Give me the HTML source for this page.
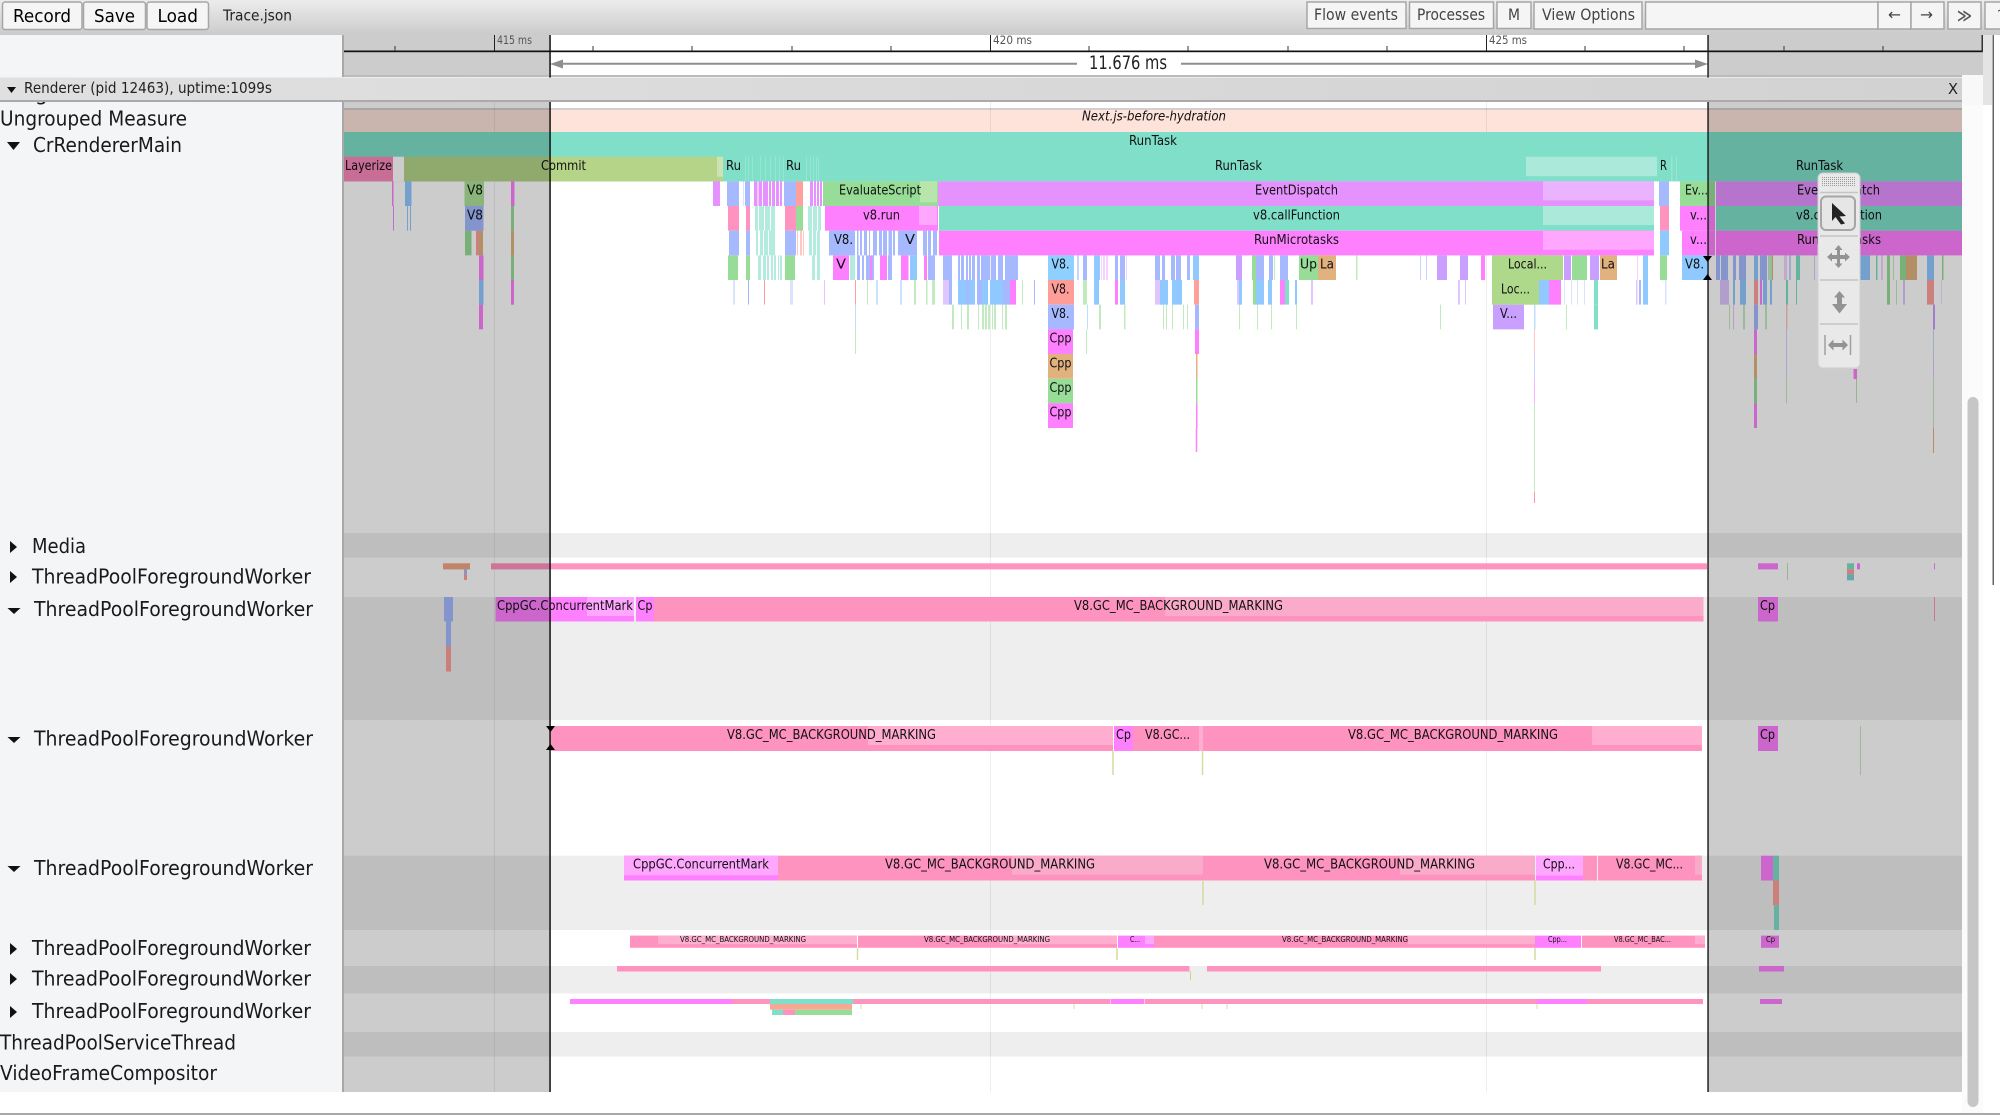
<!DOCTYPE html>
<html><head><meta charset="utf-8"><title>Trace.json</title>
<style>
html,body{margin:0;padding:0;background:#fff;width:2000px;height:1115px;overflow:hidden}
svg{display:block}
text{font-family:"DejaVu Sans","Liberation Sans",sans-serif;fill:#111}
.bt{font-size:13px}
.lb{font-size:20px;fill:#1a1a1a}
.tb{font-size:16px;fill:#444}
path{fill:none}
.l{stroke:#e592ff}.b{stroke:#a6b9ff}.s{stroke:#90c9ff}.p{stroke:#ff93c0}.m{stroke:#ff80ff}.g{stroke:#97dc97}.t{stroke:#80dfc9}.a{stroke:#ffa09b}.n{stroke:#e2b27e}.u{stroke:#c9a0ff}
.r{stroke-width:24.67}
.o6{opacity:.6}.o4{opacity:.4}
</style></head><body>
<svg width="2000" height="1115" viewBox="0 0 2000 1115" xmlns="http://www.w3.org/2000/svg">
<defs><linearGradient id="tg" x1="0" y1="0" x2="0" y2="1"><stop offset="0" stop-color="#ececec"/><stop offset="1" stop-color="#cbcbcb"/></linearGradient>
<linearGradient id="hg" x1="0" y1="0" x2="1" y2="0"><stop offset="0" stop-color="#e0e0e0"/><stop offset="1" stop-color="#d2d2d2"/></linearGradient></defs>
<rect width="2000" height="1115" fill="#fff"/>
<rect x="0" y="35" width="343" height="1057" fill="#f4f5f7"/>
<rect x="1962" y="102" width="21" height="1011" fill="#fbfbfb"/>
<rect x="1983" y="35" width="9" height="70" fill="#e4e4e4"/>
<rect x="1992.5" y="35" width="1.5" height="550" fill="#666"/>

<!-- clipped label -->
<text x="35" y="100" class="lb">g</text>

<!-- rows backgrounds -->
<rect x="343" y="108" width="1619" height="2" fill="#d0d0d0"/>
<rect x="343" y="110" width="1619" height="22" fill="#fde3da"/>
<rect x="343" y="533" width="1619" height="24.6" fill="#eee"/>
<rect x="343" y="597" width="1619" height="123" fill="#eee"/>
<rect x="343" y="855.7" width="1619" height="74.3" fill="#eee"/>
<rect x="343" y="966" width="1619" height="27.4" fill="#eee"/>
<rect x="343" y="1032" width="1619" height="24.5" fill="#eee"/>
<path d="M494.5 102V1092M990.5 102V1092M1486.5 102V1092" stroke="#000" stroke-opacity=".07" stroke-width="1"/>

<!-- main big rows -->
<rect x="343" y="132" width="1619" height="25" fill="#80dfc9"/>
<rect x="343" y="156.7" width="1619" height="24.7" fill="#80dfc9"/>
<rect x="343" y="156.7" width="50" height="24.7" fill="#fa89bb"/>
<rect x="393" y="156.7" width="11" height="24.7" fill="#fff"/>
<rect x="404" y="156.7" width="319" height="24.7" fill="#b5d488"/>
<rect x="717" y="156.7" width="6" height="20" fill="#cfe3b0"/>
<rect x="1526" y="156.7" width="131" height="19.5" fill="#abe9db"/>
<path d="M745 169H746M748 169H749M752 169H753M760 169H761M765 169H766M770 169H771M775 169H776M779 169H780M783 169H784M806 169H807M810 169H811M813 169H814M816 169H817M818 169H819M1671 169H1672.5M1676 169H1677" stroke="#fff" stroke-opacity=".2" class="r"/>

<rect x="823" y="181.3" width="115" height="24.7" fill="#97dc97"/><rect x="920" y="181.3" width="17" height="21" fill="#b7e5ab"/>
<rect x="938" y="181.3" width="716" height="24.7" fill="#e592ff"/><rect x="1543" y="181.3" width="111" height="19" fill="#eab3ff"/>
<rect x="1680" y="181.3" width="35" height="24.7" fill="#97dc97"/>
<rect x="1716" y="181.3" width="246" height="24.7" fill="#e592ff"/>

<rect x="825" y="206" width="113" height="24.7" fill="#ff80ff"/><rect x="919" y="206" width="18" height="19" fill="#ffa6ff"/>
<rect x="939" y="206" width="715" height="24.7" fill="#80dfc9"/><rect x="1543" y="206" width="111" height="19" fill="#abe9db"/>
<rect x="1680" y="206" width="35" height="24.7" fill="#ff80ff"/>
<rect x="1716" y="206" width="246" height="24.7" fill="#80dfc9"/>

<rect x="939" y="230.7" width="715" height="24.7" fill="#ff80ff"/><rect x="1543" y="230.7" width="111" height="19" fill="#ffa6ff"/>
<rect x="1682" y="230.7" width="33" height="24.7" fill="#ff80ff"/>
<rect x="1716" y="230.7" width="246" height="24.7" fill="#ff80ff"/>

<!-- row 2 stripes -->
<g transform="translate(0,193.7)">
<path class="r l" d="M713 0H720M754 0H757.5M758.5 0H762M763 0H768M769 0H771M772 0H775M776 0H779M780 0H782M810 0H813M814 0H816M817 0H819M820 0H822"/>
<path class="r b" d="M727 0H739M745 0H750M784 0H796M1659 0H1669"/>
<path class="r a" d="M796 0H803"/>
<path class="r b o4" d="M743 0H744"/>
</g>
<g transform="translate(0,218.3)">
<path class="r p" d="M728 0H739M746 0H750M785 0H796M1660 0H1669"/>
<path class="r g" d="M796 0H803"/>
<path class="r t o6" d="M755 0H758M759 0H764M765 0H770M771 0H775M808 0H812M813 0H817M818 0H821"/>
</g>
<g transform="translate(0,243)">
<path class="r b" d="M729 0H739M746 0H750M785 0H796M829 0H855M857 0H858.5M860 0H862M864 0H867M869 0H870M873 0H877M879 0H882M883 0H887M888.5 0H892M893 0H895M898 0H917M923 0H927M928 0H931M933 0H937"/>
<path class="r s" d="M1660 0H1669"/>
<path class="r a o6" d="M797 0H798M800 0H802M803 0H804"/>
<path class="r t o6" d="M756 0H758M760 0H763M764 0H768M769 0H775M809 0H812M813 0H816M817 0H820"/>
<path class="r g" d="M465 0H471.5"/>
<path class="r a" d="M476 0H479"/>
<path class="r n" d="M479 0H483M511 0H514"/>
</g>
<g transform="translate(0,267.7)">
<path class="r g" d="M511 0H514M728 0H738M746 0H750M785 0H795M1252 0H1256M1660 0H1667M1572 0H1587M1887 0H1890M1900 0H1906M1942 0H1943.5"/>
<path class="r t o6" d="M758 0H761M763 0H766M767 0H769M771 0H773M774 0H776M778 0H779M780 0H782M812 0H815M817 0H820M850 0H855"/>
<path class="r m" d="M479 0H483.5M833 0H849M870 0H873M880 0H887M901 0H908.5M924 0H927M1481 0H1485"/>
<path class="r b" d="M857 0H860M862 0H864M866 0H870M872 0H874M888 0H892M928 0H935M943 0H952M958 0H960M961 0H964M966 0H968M969 0H971M972 0H975M977 0H980M981 0H990M991 0H996M998 0H1003M1005 0H1018M1083 0H1087M1115 0H1118M1120 0H1125M1155 0H1160M1162 0H1165M1171 0H1175M1176 0H1181M1187 0H1190M1256 0H1264M1269 0H1273M1280 0H1288M1716 0H1720M1721 0H1728M1733 0H1736M1739 0H1746M1760 0H1767"/>
<path class="r s" d="M910 0H917M1094 0H1100M1193 0H1199M1643 0H1648M1754 0H1758M1860 0H1870M1927 0H1934"/>
<path class="r u" d="M1236 0H1242M1437 0H1447M1460 0H1468M1564 0H1571M1590 0H1599"/>
<path class="r l o4" d="M1101 0H1102M1103 0H1105M1106 0H1108M1126 0H1127M1637 0H1638M1784 0H1787M1881 0H1883"/>
<path class="r b o6" d="M1077 0H1079M1420 0H1421M1426 0H1427M1789 0H1791M1814 0H1815"/>
<path class="r t" d="M1796 0H1800M1876 0H1877.5"/>
<path class="r n" d="M1906 0H1917M1772 0H1773"/>
<path class="r g o6" d="M1274 0H1275M1356 0H1357.5M1768 0H1772M1893 0H1894"/>
</g>
<g transform="translate(0,292.3)">
<path class="r b o4" d="M733 0H735M790 0H793"/>
<path class="r b" d="M748 0H749M949 0H952M966 0H969M977 0H982M1003 0H1010M1034 0H1035M1160 0H1162M1639 0H1641"/>
<path class="r a" d="M764 0H765M855 0H856M1194 0H1199M1754 0H1758M1927 0H1934"/>
<path class="r u o6" d="M824 0H825M943 0H949M1155 0H1160M1237 0H1242M1311 0H1313M1458 0H1460M1465 0H1466M1636 0H1637.5M1720 0H1729M1903 0H1905"/>
<path class="r g o6" d="M867 0H868M914 0H916M926 0H927.5M932 0H935M1022 0H1023M1083 0H1087M1896 0H1897"/>
<path class="r s" d="M876.5 0H877.5M900.5 0H901.5M958 0H966M969 0H975M982 0H988M990 0H1003M1094 0H1099M1120 0H1125M1160 0H1168M1172 0H1182M1239 0H1242M1256 0H1264M1268 0H1272M1295 0H1297M1539 0H1549M1643 0H1648M1733 0H1735M1740 0H1746M1763 0H1767M1770 0H1772"/>
<path class="r m" d="M1010 0H1016M1115 0H1118M1280 0H1285M1549 0H1561M1760 0H1762"/>
<path class="r g" d="M1253 0H1256M1887 0H1890"/>
<path class="r t" d="M1285 0H1289M1594 0H1598M1786 0H1788M1796 0H1797"/>
<path class="r b o4" d="M1564 0H1565M1571 0H1572M1577 0H1578M1584 0H1585M1665 0H1666.5M1941 0H1942"/>
</g>
<g transform="translate(0,317)">
<path class="r s o6" d="M855 0H856M1087 0H1088M1534 0H1535.5"/>
<path class="r g o6" d="M952 0H954M961 0H962M967 0H969M978 0H979M982 0H984M985 0H987M988 0H990M992 0H993M994 0H996M1002 0H1003M1005 0H1007M1099 0H1101M1124 0H1125.5M1163 0H1164M1166 0H1167M1172 0H1173M1183 0H1184M1187 0H1188M1239 0H1240M1257 0H1258M1271 0H1272M1296 0H1297M1440 0H1441M1566 0H1567M1729 0H1730M1743 0H1745M1765 0H1767"/>
<path class="r b" d="M1195 0H1199M1754 0H1758"/>
<path class="r u" d="M1493 0H1524M1933 0H1935"/>
<path class="r t" d="M1594 0H1598"/>
<path class="r a o6" d="M1786 0H1787.5"/>
<path class="r l o6" d="M1733 0H1734"/>
<path class="r m" d="M479 0H483"/>
</g>
<g transform="translate(0,341.7)">
<path class="r g o6" d="M855 0H856M1086 0H1087"/>
<path class="r m" d="M1195 0H1199M1754 0H1757"/>
<path class="r a o6" d="M1534 0H1535"/>
<path class="r b o6" d="M1786 0H1787M1933 0H1934"/>
</g>
<g transform="translate(0,366.3)">
<path class="r n" d="M1196 0H1197.5M1754 0H1757"/>
<path class="r b o6" d="M1534 0H1535M1786 0H1787"/>
<path class="r u o6" d="M1933 0H1934"/>
</g>
<g transform="translate(0,391)">
<path class="r g" d="M1196 0H1197.5M1754 0H1757"/>
<path class="r m o6" d="M1534 0H1535"/>
<path class="r g o6" d="M1786 0H1787M1933 0H1934"/>
</g>
<rect x="1853.500" y="369" width="3.500" height="10" fill="#ff80ff"/>
<rect x="1856" y="379" width="1" height="24" fill="#97dc97" fill-opacity=".7"/>
<g transform="translate(0,415.7)">
<path class="r m" d="M1196 0H1197.5M1754 0H1757"/>
<path class="r g o6" d="M1534 0H1535M1933 0H1934"/>
</g>
<path d="M1196.5 428V452" class="m" stroke-width="1.5"/>
<path d="M1534.5 428V492" class="g o6" stroke-width="1"/><path d="M1534.5 492V503" class="p" stroke-width="1"/>
<path d="M1933.5 428V453" class="n" stroke-width="1"/>

<!-- left dim region bars -->
<rect x="392" y="181.3" width="1.5" height="24.7" fill="#ff80ff"/><rect x="405" y="181.3" width="6.5" height="24.7" fill="#90c9ff"/>
<rect x="464.5" y="181.3" width="19.5" height="24.7" fill="#aee29a"/><rect x="511" y="181.3" width="3.5" height="24.7" fill="#ff80ff"/>
<rect x="393" y="206" width="1" height="24.7" fill="#e592ff"/><rect x="407" y="206" width="1" height="24.7" fill="#90c9ff"/><rect x="410" y="206" width="1" height="24.7" fill="#90c9ff"/>
<rect x="465" y="206" width="18.5" height="24.7" fill="#a6b9ff"/><rect x="511" y="206" width="3" height="24.7" fill="#97dc97"/>
<rect x="479" y="280" width="4.5" height="24.7" fill="#90c9ff"/><rect x="511" y="280" width="3" height="24.7" fill="#ff80ff"/>

<!-- V8 column -->
<rect x="1048" y="255.3" width="26" height="24.7" fill="#8ed0ff"/>
<rect x="1048" y="280" width="26" height="24.7" fill="#ff9e98"/>
<rect x="1048" y="304.7" width="26" height="24.7" fill="#a6b9ff"/>
<rect x="1048" y="329.3" width="25" height="24.7" fill="#ff80ff"/>
<rect x="1048" y="354" width="25" height="24.7" fill="#e2b27e"/>
<rect x="1048" y="378.7" width="25" height="24.7" fill="#97dc97"/>
<rect x="1048" y="403.3" width="25" height="24.7" fill="#ff80ff"/>
<!-- named blocks -->
<rect x="1299" y="255.3" width="19" height="24.7" fill="#97dc97"/><rect x="1318" y="255.3" width="18" height="24.7" fill="#e2b27e"/>
<rect x="1492" y="255.3" width="71" height="24.7" fill="#aed88a"/>
<rect x="1600" y="255.3" width="17" height="24.7" fill="#e2b27e"/>
<rect x="1682" y="255.3" width="26" height="24.7" fill="#90c9ff"/>
<rect x="1492" y="280" width="47" height="24.7" fill="#aed88a"/>

<!-- workers -->
<rect x="443" y="563.3" width="27" height="6.1" fill="#f0a585"/><rect x="464" y="569.4" width="3" height="5" fill="#a6b9ff"/><rect x="464" y="574.4" width="3" height="5.6" fill="#ff9e98"/>
<rect x="491" y="563.3" width="1216" height="6.1" fill="#ff93c0"/>
<rect x="1758" y="563.3" width="20" height="6.1" fill="#ff80ff"/><rect x="1787" y="563" width="1" height="17" fill="#97dc97" fill-opacity=".7"/>
<rect x="1847" y="563.3" width="7" height="6" fill="#80dfc9"/><rect x="1847" y="569.3" width="7" height="5" fill="#ffa09b"/><rect x="1847" y="574.3" width="7" height="6" fill="#80cfd9"/>
<rect x="1857" y="563.3" width="3" height="6" fill="#ff80ff"/><rect x="1934" y="563.3" width="1" height="6" fill="#ff80ff"/>

<rect x="444" y="597" width="9" height="24.5" fill="#a6b9ff"/><rect x="446" y="621.5" width="5" height="25" fill="#a6b9ff"/><rect x="446" y="646.5" width="5" height="25" fill="#ff9e98"/>
<rect x="495.5" y="597" width="138.5" height="24.5" fill="#ff80ff"/><rect x="587" y="597" width="47" height="19" fill="#ffa6ff"/>
<rect x="636" y="597" width="18" height="24.5" fill="#ff80ff"/>
<rect x="654" y="597" width="1049.5" height="24.5" fill="#ff93c0"/><rect x="1165" y="597" width="538.5" height="19" fill="#f9abc9"/>
<rect x="1758" y="597" width="20" height="24.5" fill="#ff80ff"/><rect x="1934" y="597" width="1" height="24" fill="#ff93c0"/>

<rect x="550" y="726" width="563" height="25" fill="#ff93c0"/><rect x="868" y="726" width="245" height="19" fill="#ffaecf"/>
<rect x="1114" y="726" width="19" height="25" fill="#ff80ff"/>
<rect x="1133" y="726" width="66" height="25" fill="#ff93c0"/><rect x="1199" y="726" width="4" height="25" fill="#ffaecf"/>
<rect x="1203" y="726" width="499" height="25" fill="#ff93c0"/><rect x="1592" y="726" width="110" height="19" fill="#ffaecf"/>
<path d="M1113 751V775M1202.5 751V775" stroke="#d4dca0" stroke-width="1.5"/>
<rect x="1758" y="726" width="20" height="25" fill="#ff80ff"/><rect x="1860" y="726" width="1" height="49" fill="#97dc97" fill-opacity=".6"/>

<rect x="624" y="855.7" width="154" height="24.8" fill="#ff80ff"/><rect x="624" y="855.7" width="154" height="19.5" fill="#ffa6ff"/>
<rect x="778" y="855.7" width="757" height="24.8" fill="#ff93c0"/><rect x="1012" y="855.7" width="191" height="19" fill="#f9abc9"/><rect x="1400" y="855.7" width="135" height="19" fill="#f9abc9"/>
<rect x="1536" y="855.7" width="47" height="24.8" fill="#ff80ff"/><rect x="1536" y="855.7" width="47" height="20" fill="#ffa6ff"/>
<rect x="1583" y="855.7" width="14" height="24.8" fill="#ff93c0"/>
<rect x="1598" y="855.7" width="104" height="24.8" fill="#ff93c0"/><rect x="1695" y="855.7" width="7" height="19" fill="#f9abc9"/>
<path d="M1203 880V905M1535 880V905" stroke="#d4dca0" stroke-width="1.5"/>
<rect x="1761" y="855.7" width="12" height="24.8" fill="#ff80ff"/><rect x="1773" y="855.7" width="6" height="24.8" fill="#80dfc9"/><rect x="1773" y="880.5" width="6" height="24.8" fill="#ffa09b"/><rect x="1774" y="905.3" width="5" height="24.7" fill="#80dfc9"/>

<rect x="630" y="935.6" width="227" height="12.2" fill="#ff93c0"/><rect x="658" y="935.6" width="199" height="8.5" fill="#ffaecf"/>
<rect x="858" y="935.6" width="259" height="12.2" fill="#ff93c0"/><rect x="1000" y="935.6" width="117" height="8.5" fill="#ffaecf"/>
<rect x="1118" y="935.6" width="36" height="12.2" fill="#ff80ff"/><rect x="1145" y="935.6" width="9" height="8.5" fill="#ffa6ff"/>
<rect x="1154" y="935.6" width="381" height="12.2" fill="#ff93c0"/><rect x="1408" y="935.6" width="127" height="8.5" fill="#ffaecf"/>
<rect x="1535" y="935.6" width="46" height="12.2" fill="#ff80ff"/>
<rect x="1582" y="935.6" width="123" height="12.2" fill="#ff93c0"/><rect x="1695" y="935.6" width="10" height="8.5" fill="#ffaecf"/>
<path d="M857.5 948V960M1117 948V960M1535 948V960" stroke="#d4dca0" stroke-width="1.5"/>
<rect x="1761" y="935.6" width="18" height="12.2" fill="#ff80ff"/>

<rect x="617" y="966" width="572.5" height="5.5" fill="#ff93c0"/><rect x="1190" y="971" width="1" height="9" fill="#c8d490"/><rect x="1207" y="966" width="394" height="5.5" fill="#ff93c0"/>
<rect x="1759" y="966" width="25" height="5.5" fill="#ff80ff"/>

<rect x="570" y="999" width="162" height="5" fill="#ff80ff"/><rect x="732" y="999" width="38" height="5" fill="#ff93c0"/><rect x="770" y="999" width="83" height="5" fill="#80dfc9"/>
<rect x="853" y="999" width="257" height="5" fill="#ff93c0"/><rect x="1110.5" y="999" width="33.5" height="5" fill="#ff80ff"/><rect x="1144.5" y="999" width="392.5" height="5" fill="#ff93c0"/><rect x="1537" y="999" width="50" height="5" fill="#ff80ff"/><rect x="1587" y="999" width="116" height="5" fill="#ff93c0"/>
<rect x="770" y="1004" width="82" height="5.7" fill="#f7a892"/><rect x="772" y="1009.7" width="11" height="5.3" fill="#80dfc9"/><rect x="783" y="1009.7" width="12" height="5.3" fill="#ff93c0"/><rect x="795" y="1009.7" width="57" height="5.3" fill="#97dc97"/>
<path d="M861 1004V1009M1074 1004V1009M1202 1004V1009M1227 1004V1009M1537 1004V1009" stroke="#d8dcaa" stroke-width="1"/>
<rect x="1760" y="999" width="22" height="5" fill="#ff80ff"/>

<!-- chart text -->
<text x="1082" y="120.5" class="bt" font-style="italic" textLength="144" lengthAdjust="spacingAndGlyphs">Next.js-before-hydration</text>
<text x="1129" y="145" class="bt" textLength="48" lengthAdjust="spacingAndGlyphs">RunTask</text>
<text x="345" y="170" class="bt" textLength="47" lengthAdjust="spacingAndGlyphs">Layerize</text>
<text x="541" y="170" class="bt" textLength="45" lengthAdjust="spacingAndGlyphs">Commit</text>
<text x="726" y="170" class="bt" textLength="15" lengthAdjust="spacingAndGlyphs">Ru</text>
<text x="786" y="170" class="bt" textLength="15" lengthAdjust="spacingAndGlyphs">Ru</text>
<text x="1215" y="170" class="bt" textLength="47" lengthAdjust="spacingAndGlyphs">RunTask</text>
<text x="1660" y="170" class="bt" textLength="7" lengthAdjust="spacingAndGlyphs">R</text>
<text x="1796" y="170" class="bt" textLength="47" lengthAdjust="spacingAndGlyphs">RunTask</text>
<text x="467" y="194.7" class="bt" textLength="16" lengthAdjust="spacingAndGlyphs">V8</text>
<text x="839" y="194.7" class="bt" textLength="82" lengthAdjust="spacingAndGlyphs">EvaluateScript</text>
<text x="1255" y="194.7" class="bt" textLength="83" lengthAdjust="spacingAndGlyphs">EventDispatch</text>
<text x="1685" y="194.7" class="bt" textLength="23" lengthAdjust="spacingAndGlyphs">Ev...</text>
<text x="1797" y="194.7" class="bt" textLength="83" lengthAdjust="spacingAndGlyphs">EventDispatch</text>
<text x="467" y="219.3" class="bt" textLength="16" lengthAdjust="spacingAndGlyphs">V8</text>
<text x="863" y="219.3" class="bt" textLength="37" lengthAdjust="spacingAndGlyphs">v8.run</text>
<text x="1253" y="219.3" class="bt" textLength="87" lengthAdjust="spacingAndGlyphs">v8.callFunction</text>
<text x="1690" y="219.3" class="bt" textLength="17" lengthAdjust="spacingAndGlyphs">v...</text>
<text x="1796" y="219.3" class="bt" textLength="86" lengthAdjust="spacingAndGlyphs">v8.callFunction</text>
<text x="1254" y="244" class="bt" textLength="85" lengthAdjust="spacingAndGlyphs">RunMicrotasks</text>
<text x="1690" y="244" class="bt" textLength="17" lengthAdjust="spacingAndGlyphs">v...</text>
<text x="1797" y="244" class="bt" textLength="84" lengthAdjust="spacingAndGlyphs">RunMicrotasks</text>
<text x="834" y="244" class="bt" textLength="19" lengthAdjust="spacingAndGlyphs">V8.</text>
<text x="905" y="244" class="bt" textLength="10" lengthAdjust="spacingAndGlyphs">V</text>
<text x="836" y="268.7" class="bt" textLength="10" lengthAdjust="spacingAndGlyphs">V</text>
<text x="1051.5" y="268.7" class="bt" textLength="18" lengthAdjust="spacingAndGlyphs">V8.</text>
<text x="1051.5" y="293.3" class="bt" textLength="18" lengthAdjust="spacingAndGlyphs">V8.</text>
<text x="1051.5" y="318" class="bt" textLength="18" lengthAdjust="spacingAndGlyphs">V8.</text>
<text x="1049.5" y="342.7" class="bt" textLength="22" lengthAdjust="spacingAndGlyphs">Cpp</text>
<text x="1049.5" y="367.3" class="bt" textLength="22" lengthAdjust="spacingAndGlyphs">Cpp</text>
<text x="1049.5" y="392" class="bt" textLength="22" lengthAdjust="spacingAndGlyphs">Cpp</text>
<text x="1049.5" y="416.7" class="bt" textLength="22" lengthAdjust="spacingAndGlyphs">Cpp</text>
<text x="1300" y="268.7" class="bt" textLength="17" lengthAdjust="spacingAndGlyphs">Up</text>
<text x="1320" y="268.7" class="bt" textLength="14" lengthAdjust="spacingAndGlyphs">La</text>
<text x="1508" y="268.7" class="bt" textLength="39" lengthAdjust="spacingAndGlyphs">Local...</text>
<text x="1601" y="268.7" class="bt" textLength="14" lengthAdjust="spacingAndGlyphs">La</text>
<text x="1685" y="268.7" class="bt" textLength="19" lengthAdjust="spacingAndGlyphs">V8.</text>
<text x="1501" y="293.3" class="bt" textLength="29" lengthAdjust="spacingAndGlyphs">Loc...</text>
<text x="1500" y="318" class="bt" textLength="17" lengthAdjust="spacingAndGlyphs">V...</text>

<text x="497" y="610" class="bt" textLength="136" lengthAdjust="spacingAndGlyphs">CppGC.ConcurrentMark</text>
<text x="637.5" y="610" class="bt" textLength="15" lengthAdjust="spacingAndGlyphs">Cp</text>
<text x="1074" y="610" class="bt" textLength="209" lengthAdjust="spacingAndGlyphs">V8.GC_MC_BACKGROUND_MARKING</text>
<text x="1760" y="610" class="bt" textLength="15" lengthAdjust="spacingAndGlyphs">Cp</text>
<text x="727" y="739" class="bt" textLength="209" lengthAdjust="spacingAndGlyphs">V8.GC_MC_BACKGROUND_MARKING</text>
<text x="1116" y="739" class="bt" textLength="15" lengthAdjust="spacingAndGlyphs">Cp</text>
<text x="1145" y="739" class="bt" textLength="45" lengthAdjust="spacingAndGlyphs">V8.GC...</text>
<text x="1348" y="739" class="bt" textLength="210" lengthAdjust="spacingAndGlyphs">V8.GC_MC_BACKGROUND_MARKING</text>
<text x="1760" y="739" class="bt" textLength="15" lengthAdjust="spacingAndGlyphs">Cp</text>
<text x="633" y="868.5" class="bt" textLength="136" lengthAdjust="spacingAndGlyphs">CppGC.ConcurrentMark</text>
<text x="885" y="868.5" class="bt" textLength="210" lengthAdjust="spacingAndGlyphs">V8.GC_MC_BACKGROUND_MARKING</text>
<text x="1264" y="868.5" class="bt" textLength="211" lengthAdjust="spacingAndGlyphs">V8.GC_MC_BACKGROUND_MARKING</text>
<text x="1543" y="868.5" class="bt" textLength="32" lengthAdjust="spacingAndGlyphs">Cpp...</text>
<text x="1616" y="868.5" class="bt" textLength="67" lengthAdjust="spacingAndGlyphs">V8.GC_MC...</text>
<text x="680" y="942" font-size="8" textLength="126" lengthAdjust="spacingAndGlyphs">V8.GC_MC_BACKGROUND_MARKING</text>
<text x="924" y="942" font-size="8" textLength="126" lengthAdjust="spacingAndGlyphs">V8.GC_MC_BACKGROUND_MARKING</text>
<text x="1130" y="942" font-size="8" textLength="10" lengthAdjust="spacingAndGlyphs">C...</text>
<text x="1282" y="942" font-size="8" textLength="126" lengthAdjust="spacingAndGlyphs">V8.GC_MC_BACKGROUND_MARKING</text>
<text x="1548" y="942" font-size="8" textLength="19" lengthAdjust="spacingAndGlyphs">Cpp...</text>
<text x="1614" y="942" font-size="8" textLength="57" lengthAdjust="spacingAndGlyphs">V8.GC_MC_BAC...</text>
<text x="1766" y="942" font-size="8" textLength="9" lengthAdjust="spacingAndGlyphs">Cp</text>

<!-- dim overlays -->
<rect x="344" y="102" width="206" height="990" fill="#000" fill-opacity=".2"/>
<rect x="1708" y="102" width="254" height="990" fill="#000" fill-opacity=".2"/>

<!-- ruler -->
<rect x="343" y="35" width="207" height="40" fill="#ccc"/>
<rect x="1708" y="35" width="275" height="40" fill="#ccc"/>
<rect x="343" y="75" width="1640" height="2" fill="#bbb"/>
<rect x="343" y="50.5" width="1640" height="1.7" fill="#111"/>
<rect x="1981.5" y="35" width="1.5" height="17" fill="#333"/>
<path d="M494.5 35V51M990.5 35V51M1486.5 35V51" stroke="#222" stroke-width="1"/>
<path d="M395 46V51M593 46V51M692 46V51M792 46V51M891 46V51M1089 46V51M1188 46V51M1288 46V51M1387 46V51M1585 46V51M1684 46V51M1784 46V51M1883 46V51" stroke="#333" stroke-width="1"/>
<text x="497" y="44" font-size="11.5" style="fill:#555" textLength="35" lengthAdjust="spacingAndGlyphs">415 ms</text>
<text x="993" y="44" font-size="11.5" style="fill:#555" textLength="39" lengthAdjust="spacingAndGlyphs">420 ms</text>
<text x="1489" y="44" font-size="11.5" style="fill:#555" textLength="38" lengthAdjust="spacingAndGlyphs">425 ms</text>
<path d="M555 63.7H1077M1181 63.7H1700" stroke="#8f8f8f" stroke-width="2"/>
<polygon points="550,64 563,59.500 563,68.500" fill="#8f8f8f"/><polygon points="1708,64 1695,59.500 1695,68.500" fill="#8f8f8f"/>
<text x="1089" y="69" font-size="19" style="fill:#222" textLength="78" lengthAdjust="spacingAndGlyphs">11.676 ms</text>

<!-- selection lines -->
<rect x="549.3" y="35" width="1.5" height="1057" fill="#111"/>
<rect x="1707.3" y="35" width="1.5" height="1057" fill="#222"/>
<polygon points="546,726 555,726 550.5,732" fill="#000"/><polygon points="546,750 555,750 550.5,744" fill="#000"/>
<polygon points="1703,256 1712,256 1707.5,262" fill="#000"/><polygon points="1703,280 1712,280 1707.5,274" fill="#000"/>

<!-- left panel labels -->
<rect x="342" y="102" width="2" height="990" fill="#a8a8a8"/><rect x="342" y="35" width="2" height="42" fill="#a8a8a8"/>
<text x="0" y="125.5" class="lb" textLength="187" lengthAdjust="spacingAndGlyphs">Ungrouped Measure</text>
<polygon points="7,142 20,142 13.5,150" fill="#111"/>
<text x="33" y="152" class="lb" textLength="149" lengthAdjust="spacingAndGlyphs">CrRendererMain</text>
<polygon points="10,541 10,553 17,547" fill="#111"/><text x="32" y="553" class="lb" textLength="54" lengthAdjust="spacingAndGlyphs">Media</text>
<polygon points="10,571 10,583 17,577" fill="#111"/><text x="32" y="583.5" class="lb" textLength="279" lengthAdjust="spacingAndGlyphs">ThreadPoolForegroundWorker</text>
<polygon points="7.5,608 20.5,608 14,614" fill="#111"/><text x="34" y="616" class="lb" textLength="279" lengthAdjust="spacingAndGlyphs">ThreadPoolForegroundWorker</text>
<polygon points="7.5,737 20.5,737 14,743" fill="#111"/><text x="34" y="745.5" class="lb" textLength="279" lengthAdjust="spacingAndGlyphs">ThreadPoolForegroundWorker</text>
<polygon points="7.5,866 20.5,866 14,872" fill="#111"/><text x="34" y="875" class="lb" textLength="279" lengthAdjust="spacingAndGlyphs">ThreadPoolForegroundWorker</text>
<polygon points="10,943 10,955 17,949" fill="#111"/><text x="32" y="955" class="lb" textLength="279" lengthAdjust="spacingAndGlyphs">ThreadPoolForegroundWorker</text>
<polygon points="10,973 10,985 17,979" fill="#111"/><text x="32" y="985.5" class="lb" textLength="279" lengthAdjust="spacingAndGlyphs">ThreadPoolForegroundWorker</text>
<polygon points="10,1006 10,1018 17,1012" fill="#111"/><text x="32" y="1018" class="lb" textLength="279" lengthAdjust="spacingAndGlyphs">ThreadPoolForegroundWorker</text>
<text x="0" y="1049.5" class="lb" textLength="236" lengthAdjust="spacingAndGlyphs">ThreadPoolServiceThread</text>
<text x="0" y="1080" class="lb" textLength="217" lengthAdjust="spacingAndGlyphs">VideoFrameCompositor</text>

<!-- renderer header -->
<rect x="0" y="77.5" width="1962" height="22.5" fill="url(#hg)"/>
<rect x="0" y="100" width="1962" height="2" fill="#aaa"/>
<rect x="1962" y="75" width="21" height="30" fill="#f8f8f8"/>
<polygon points="7,87 16,87 11.5,93" fill="#111"/>
<text x="24" y="93" font-size="15.5" style="fill:#222" textLength="248" lengthAdjust="spacingAndGlyphs">Renderer (pid 12463), uptime:1099s</text>
<text x="1948" y="94" font-size="15" style="fill:#222" textLength="10" lengthAdjust="spacingAndGlyphs">X</text>

<!-- scrollbar -->
<rect x="1967.5" y="397" width="11" height="710" rx="5.5" fill="#c6c6c6"/>
<rect x="0" y="1113" width="2000" height="2" fill="#a8a8a8"/>

<!-- tool panel -->
<rect x="1818" y="173" width="42" height="195" rx="5" fill="#e9e9e9" stroke="#d0d0d0" stroke-width="1"/>
<path d="M1822 177.5H1855M1822 179.5H1855M1822 181.5H1855M1822 183.5H1855M1822 185.5H1855" stroke="#999" stroke-width="1" stroke-dasharray="1 1"/>
<path d="M1820 192.5H1858M1820 236H1858M1820 280H1858M1820 324H1858" stroke="#c4c4c4" stroke-width="1.5"/>
<rect x="1821" y="196.5" width="34" height="33.5" rx="5" fill="#e6e6e6" stroke="#a6a6a6" stroke-width="2"/>
<polygon points="1832,203 1846,216 1839.5,216.5 1845,223.5 1841,224.5 1835.5,217 1832,221" fill="#222"/>
<path d="M1838.5 245L1842.5 250H1840V255H1845V252.5L1850 257L1845 261.5V259H1840V263.5H1842.5L1838.5 268L1834.5 263.5H1837V259H1832V261.5L1827 257L1832 252.5V255H1837V250H1834.5Z" style="fill:#939393"/>
<path d="M1839.5 291L1845 297.5H1842V304H1847L1839.5 313.5L1832 304H1837V297.5H1834Z" style="fill:#939393"/>
<path d="M1825 335V355M1850.5 335V355" stroke="#a0a0a0" stroke-width="1.5"/>
<path d="M1828 345L1833.5 339.5V343H1842.5V339.5L1848 345L1842.5 350.5V347H1833.5V350.5Z" style="fill:#939393"/>

<!-- toolbar -->
<rect x="0" y="0" width="2000" height="35" fill="url(#tg)"/>
<g fill="#f5f5f5" stroke="#a6a6a6" stroke-width="1.5">
<rect x="2.5" y="2" width="79.5" height="27.5" rx="2.5"/>
<rect x="83.5" y="2" width="62" height="27.5" rx="2.5"/>
<rect x="147" y="2" width="61.5" height="27.5" rx="2.5"/>
<rect x="1307" y="2" width="99" height="26.5"/>
<rect x="1409.5" y="2" width="84" height="26.5"/>
<rect x="1497" y="2" width="34" height="26.5"/>
<rect x="1534" y="2" width="108" height="27"/>
<rect x="1645.5" y="2" width="232.5" height="27"/>
<rect x="1878" y="2" width="33" height="27"/>
<rect x="1911" y="2" width="33" height="27"/>
<rect x="1948" y="2" width="33" height="27"/>
<rect x="1985" y="2" width="22" height="27"/>
</g>
<text x="13" y="22" font-size="18" style="fill:#000" textLength="58" lengthAdjust="spacingAndGlyphs">Record</text>
<text x="94" y="22" font-size="18" style="fill:#000" textLength="41" lengthAdjust="spacingAndGlyphs">Save</text>
<text x="157.5" y="22" font-size="18" style="fill:#000" textLength="40.5" lengthAdjust="spacingAndGlyphs">Load</text>
<text x="223" y="20.5" font-size="15.5" style="fill:#222" textLength="69" lengthAdjust="spacingAndGlyphs">Trace.json</text>
<text x="1314" y="20" class="tb" textLength="84" lengthAdjust="spacingAndGlyphs">Flow events</text>
<text x="1417" y="20" class="tb" textLength="68" lengthAdjust="spacingAndGlyphs">Processes</text>
<text x="1508" y="20" class="tb" textLength="12" lengthAdjust="spacingAndGlyphs">M</text>
<text x="1542" y="20" class="tb" textLength="93" lengthAdjust="spacingAndGlyphs">View Options</text>
<text x="1888" y="20" font-size="16" style="fill:#444" textLength="13" lengthAdjust="spacingAndGlyphs">←</text>
<text x="1920" y="20" font-size="16" style="fill:#444" textLength="13" lengthAdjust="spacingAndGlyphs">→</text>
<text x="1957" y="22" font-size="19" style="fill:#555" textLength="15" lengthAdjust="spacingAndGlyphs">≫</text>
<text x="1997" y="21" font-size="16" style="fill:#555">?</text>
</svg>
</body></html>
